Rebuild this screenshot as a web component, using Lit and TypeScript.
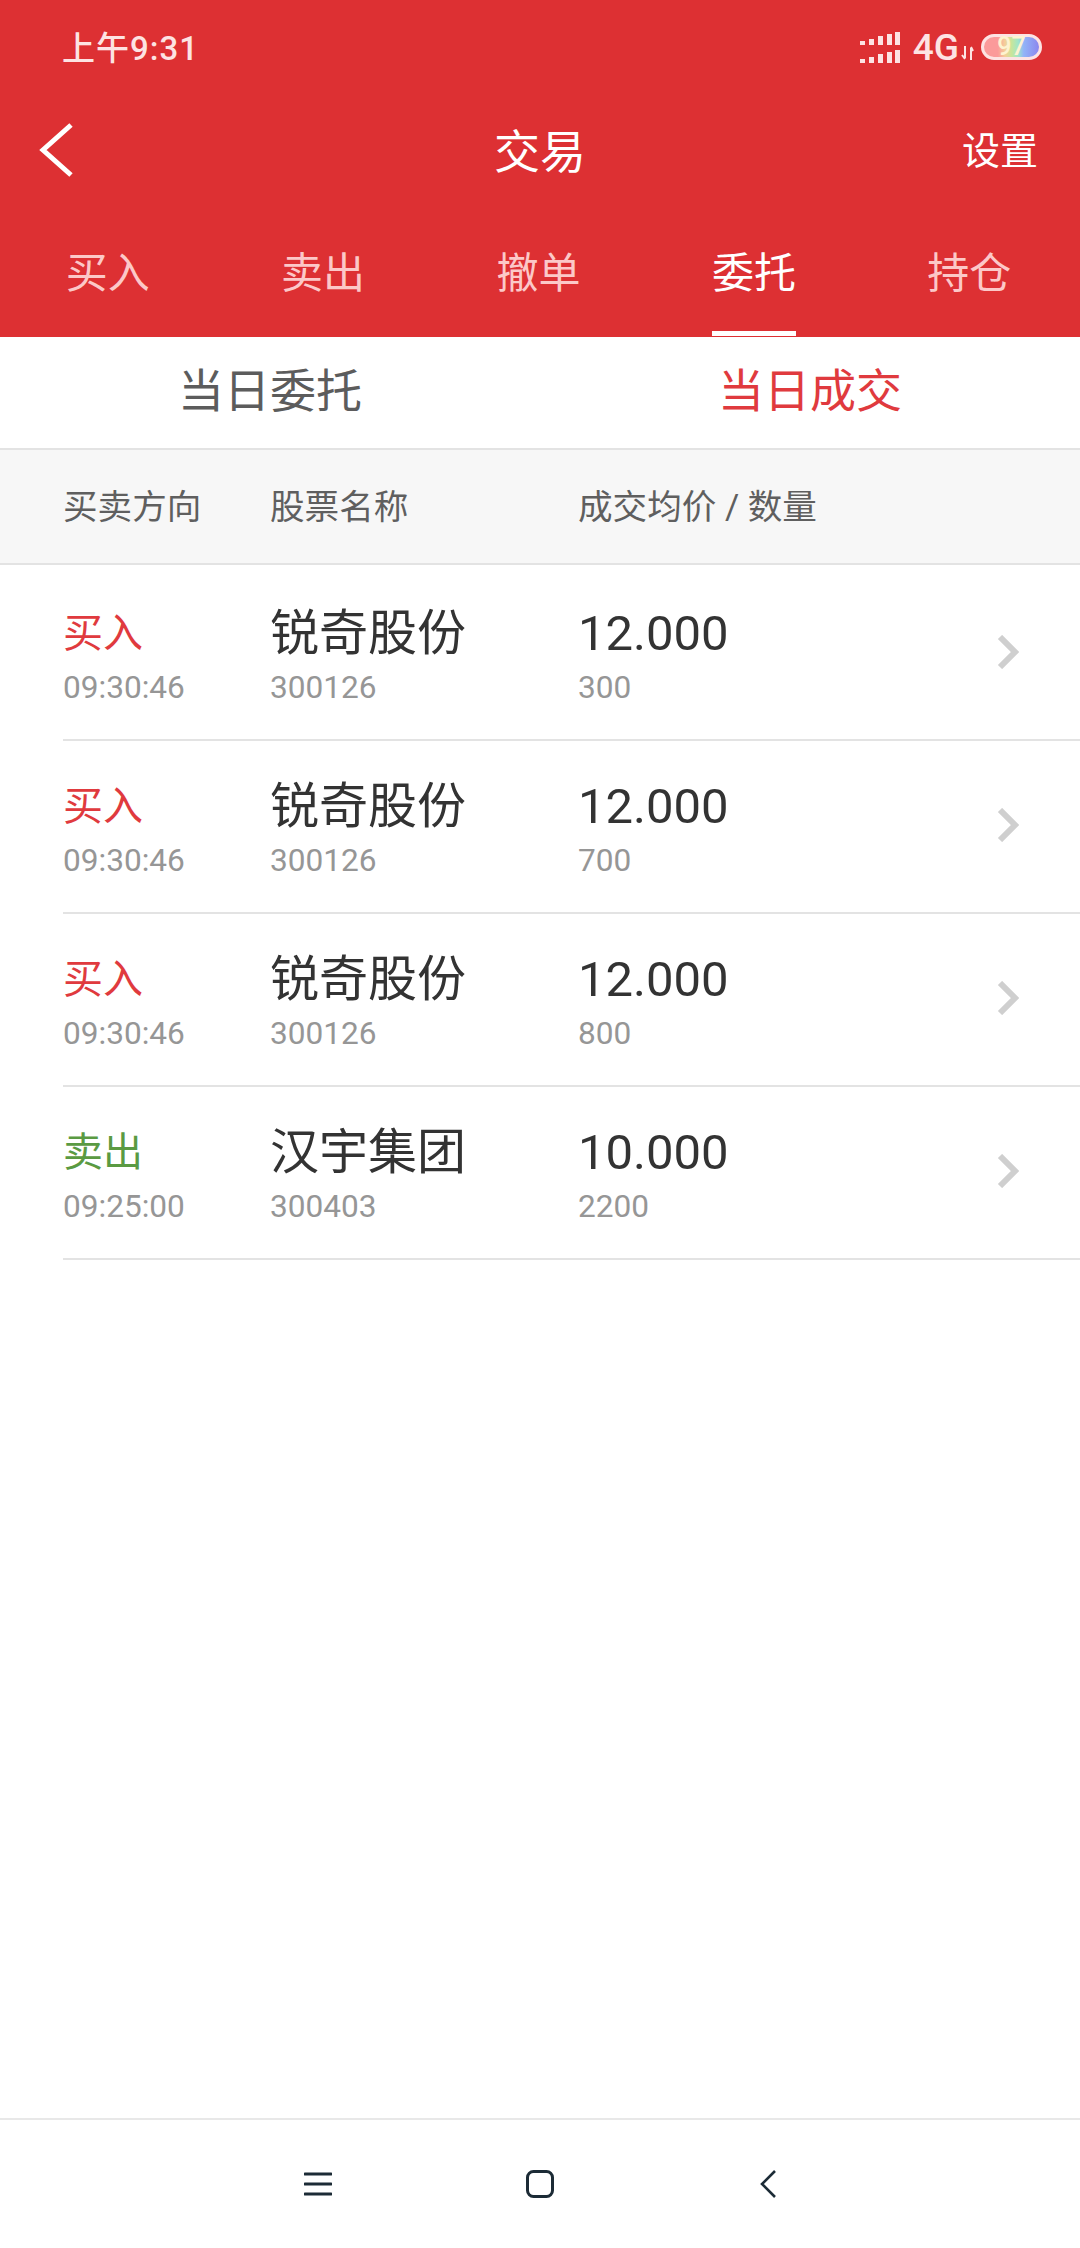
import { LitElement, html, css, svg } from "lit";
import { customElement } from "lit/decorators.js";

const tabs = ["买入", "卖出", "撤单", "委托", "持仓"];

const trades = [
  { side: "买入", sell: false, time: "09:30:46", name: "锐奇股份", code: "300126", price: "12.000", qty: "300" },
  { side: "买入", sell: false, time: "09:30:46", name: "锐奇股份", code: "300126", price: "12.000", qty: "700" },
  { side: "买入", sell: false, time: "09:30:46", name: "锐奇股份", code: "300126", price: "12.000", qty: "800" },
  { side: "卖出", sell: true, time: "09:25:00", name: "汉宇集团", code: "300403", price: "10.000", qty: "2200" },
];

// two rows of bars growing to the right
const signalBars = [
  [0, 4],
  [9, 6],
  [18, 9],
  [27, 11],
  [35, 13],
];

@customElement("app-root")
class AppRoot extends LitElement {
  static override styles = css`
    :host {
      display: flex;
      flex-direction: column;
      width: 1080px;
      height: 2248px;
      background: #fff;
      font-family: Roboto, "Noto Sans CJK SC", sans-serif;
    }

    .top {
      background: #dd3033;
      color: #fff;
      padding-bottom: 1px;
    }

    .status {
      display: flex;
      align-items: center;
      justify-content: space-between;
      height: 96px;
      padding: 0 38px 0 62px;
    }

    .clock {
      font-size: 33px;
      font-weight: 500;
      letter-spacing: 1px;
      color: #fde3e3;
      margin-bottom: 4px;
    }

    .status-right {
      display: flex;
      align-items: center;
      margin-bottom: 3px;
    }

    .net {
      font-size: 37px;
      font-weight: 500;
      margin: 2px 0 0 13px;
      color: #fde3e3;
    }

    .arrows {
      margin: 12px 7px 0 2px;
    }

    .battery {
      display: flex;
      align-items: center;
      justify-content: center;
      box-sizing: border-box;
      width: 61px;
      height: 26px;
      border: 3px solid #fde3e3;
      border-radius: 13px;
      font-size: 25px;
      font-weight: 500;
      color: #fdf3d0;
      background: linear-gradient(
        90deg,
        #fb9a9a 0%,
        #fb9a9a 25%,
        #f4cf9a 38%,
        #c9e59a 50%,
        #9fe6c8 62%,
        #92b4f7 72%,
        #8c86ee 100%
      );
    }

    .nav {
      display: grid;
      grid-template-columns: 1fr auto 1fr;
      align-items: center;
      height: 108px;
      padding: 0 42px 0 38px;
    }

    .back {
      display: block;
    }

    .title {
      font-size: 46px;
      margin: 0 0 5px 4px;
    }

    .settings {
      font-size: 38px;
      text-align: right;
      margin-bottom: 5px;
    }

    .tabs {
      display: flex;
      height: 132px;
      padding-right: 3px;
    }

    .tab {
      flex: 1;
      display: flex;
      justify-content: center;
    }

    .tab span {
      box-sizing: border-box;
      height: 132px;
      padding-top: 40px;
      line-height: 60px;
      font-size: 42px;
      color: #fcc8c8;
      border-bottom: 5px solid transparent;
    }

    .tab.active span {
      color: #fff;
      border-bottom-color: #fff;
    }

    .subtabs {
      display: flex;
      height: 113px;
      border-bottom: 2px solid #e3e3e3;
      box-sizing: border-box;
    }

    .subtab {
      flex: 1;
      text-align: center;
      line-height: 108px;
      font-size: 46px;
      color: #5c5c5c;
    }

    .subtab.active {
      color: #e03a3e;
    }

    .columns {
      display: flex;
      align-items: center;
      box-sizing: border-box;
      height: 115px;
      padding: 0 0 5px 63px;
      background: #f7f7f7;
      border-bottom: 2px solid #e3e3e3;
      font-size: 34.6px;
      color: #5f5f5f;
    }

    .col-side {
      width: 207px;
      flex: none;
    }

    .col-name {
      width: 308px;
      flex: none;
    }

    .list {
      padding-top: 3px;
      padding-left: 63px;
    }

    .row {
      display: flex;
      align-items: center;
      box-sizing: border-box;
      height: 173px;
      border-bottom: 2px solid #e3e3e3;
    }

    .big {
      height: 66px;
      line-height: 66px;
      padding-top: 1px;
      white-space: nowrap;
    }

    .small {
      height: 40px;
      line-height: 40px;
      margin-top: 1px;
      font-size: 31.6px;
      color: #969696;
    }

    .side {
      font-size: 40px;
      color: #e03a3e;
    }

    .side.sell {
      color: #5a9a42;
    }

    .name {
      font-size: 49px;
      color: #333;
    }

    .price {
      font-size: 49px;
      color: #333;
    }

    .chevron {
      margin: 0 61px 4px auto;
    }

    .spacer {
      flex: 1;
    }

    .sysbar {
      display: flex;
      align-items: center;
      justify-content: center;
      height: 130px;
      border-top: 2px solid #e8e8e8;
      box-sizing: border-box;
    }

    .sysbar svg {
      display: block;
    }

    .sys-menu {
      margin-right: 194px;
    }

    .sys-home {
      margin-right: 206px;
    }
  `;

  private renderSignal() {
    return html`<svg width="40" height="34" viewBox="0 0 40 34">
      ${signalBars.map(
        ([x, h]) => svg`
          <rect x=${x} y=${15 - h} width="5" height=${h} fill="#fde3e3"></rect>
          <rect x=${x} y=${33 - h} width="5" height=${h} fill="#fde3e3"></rect>
        `
      )}
    </svg>`;
  }

  private renderRow(t: (typeof trades)[number]) {
    return html`<div class="row">
      <div class="col-side">
        <div class="big side ${t.sell ? "sell" : ""}">${t.side}</div>
        <div class="small">${t.time}</div>
      </div>
      <div class="col-name">
        <div class="big name">${t.name}</div>
        <div class="small">${t.code}</div>
      </div>
      <div>
        <div class="big price">${t.price}</div>
        <div class="small">${t.qty}</div>
      </div>
      <svg class="chevron" width="22" height="34" viewBox="0 0 22 34">
        <path d="M3 2 L18 17 L3 32" fill="none" stroke="#cfcfcf" stroke-width="6"></path>
      </svg>
    </div>`;
  }

  override render() {
    return html`
      <div class="top">
        <div class="status">
          <span class="clock">上午9:31</span>
          <div class="status-right">
            ${this.renderSignal()}
            <span class="net">4G</span>
            <svg class="arrows" width="13" height="14" viewBox="0 0 13 14">
              <path d="M4 0 V12 M1 9 L4 13 M10 14 V2 M10 1 L12 5" fill="none" stroke="#fde3e3" stroke-width="2"></path>
            </svg>
            <div class="battery">97</div>
          </div>
        </div>
        <div class="nav">
          <svg class="back" width="36" height="56" viewBox="0 0 36 56">
            <path d="M33 3 L5 28 L33 53" fill="none" stroke="#fff" stroke-width="5"></path>
          </svg>
          <span class="title">交易</span>
          <span class="settings">设置</span>
        </div>
        <div class="tabs">
          ${tabs.map(
            (t) => html`<div class="tab ${t === "委托" ? "active" : ""}"><span>${t}</span></div>`
          )}
        </div>
      </div>
      <div class="subtabs">
        <div class="subtab">当日委托</div>
        <div class="subtab active">当日成交</div>
      </div>
      <div class="columns">
        <span class="col-side">买卖方向</span>
        <span class="col-name">股票名称</span>
        <span>成交均价 / 数量</span>
      </div>
      <div class="list">${trades.map((t) => this.renderRow(t))}</div>
      <div class="spacer"></div>
      <div class="sysbar">
        <svg class="sys-menu" width="28" height="26" viewBox="0 0 28 26">
          <path d="M1 3 H27 M1 13 H27 M1 23 H27" fill="none" stroke="#1c2b36" stroke-width="3" stroke-linecap="round"></path>
        </svg>
        <svg class="sys-home" width="28" height="28" viewBox="0 0 28 28">
          <rect x="1.5" y="1.5" width="25" height="25" rx="6" fill="none" stroke="#1c2b36" stroke-width="3"></rect>
        </svg>
        <svg width="16" height="28" viewBox="0 0 16 28">
          <path d="M15 1 L2 14 L15 27" fill="none" stroke="#1c2b36" stroke-width="2.6"></path>
        </svg>
      </div>
    `;
  }
}

// Prevent tree-shaking
void AppRoot;
